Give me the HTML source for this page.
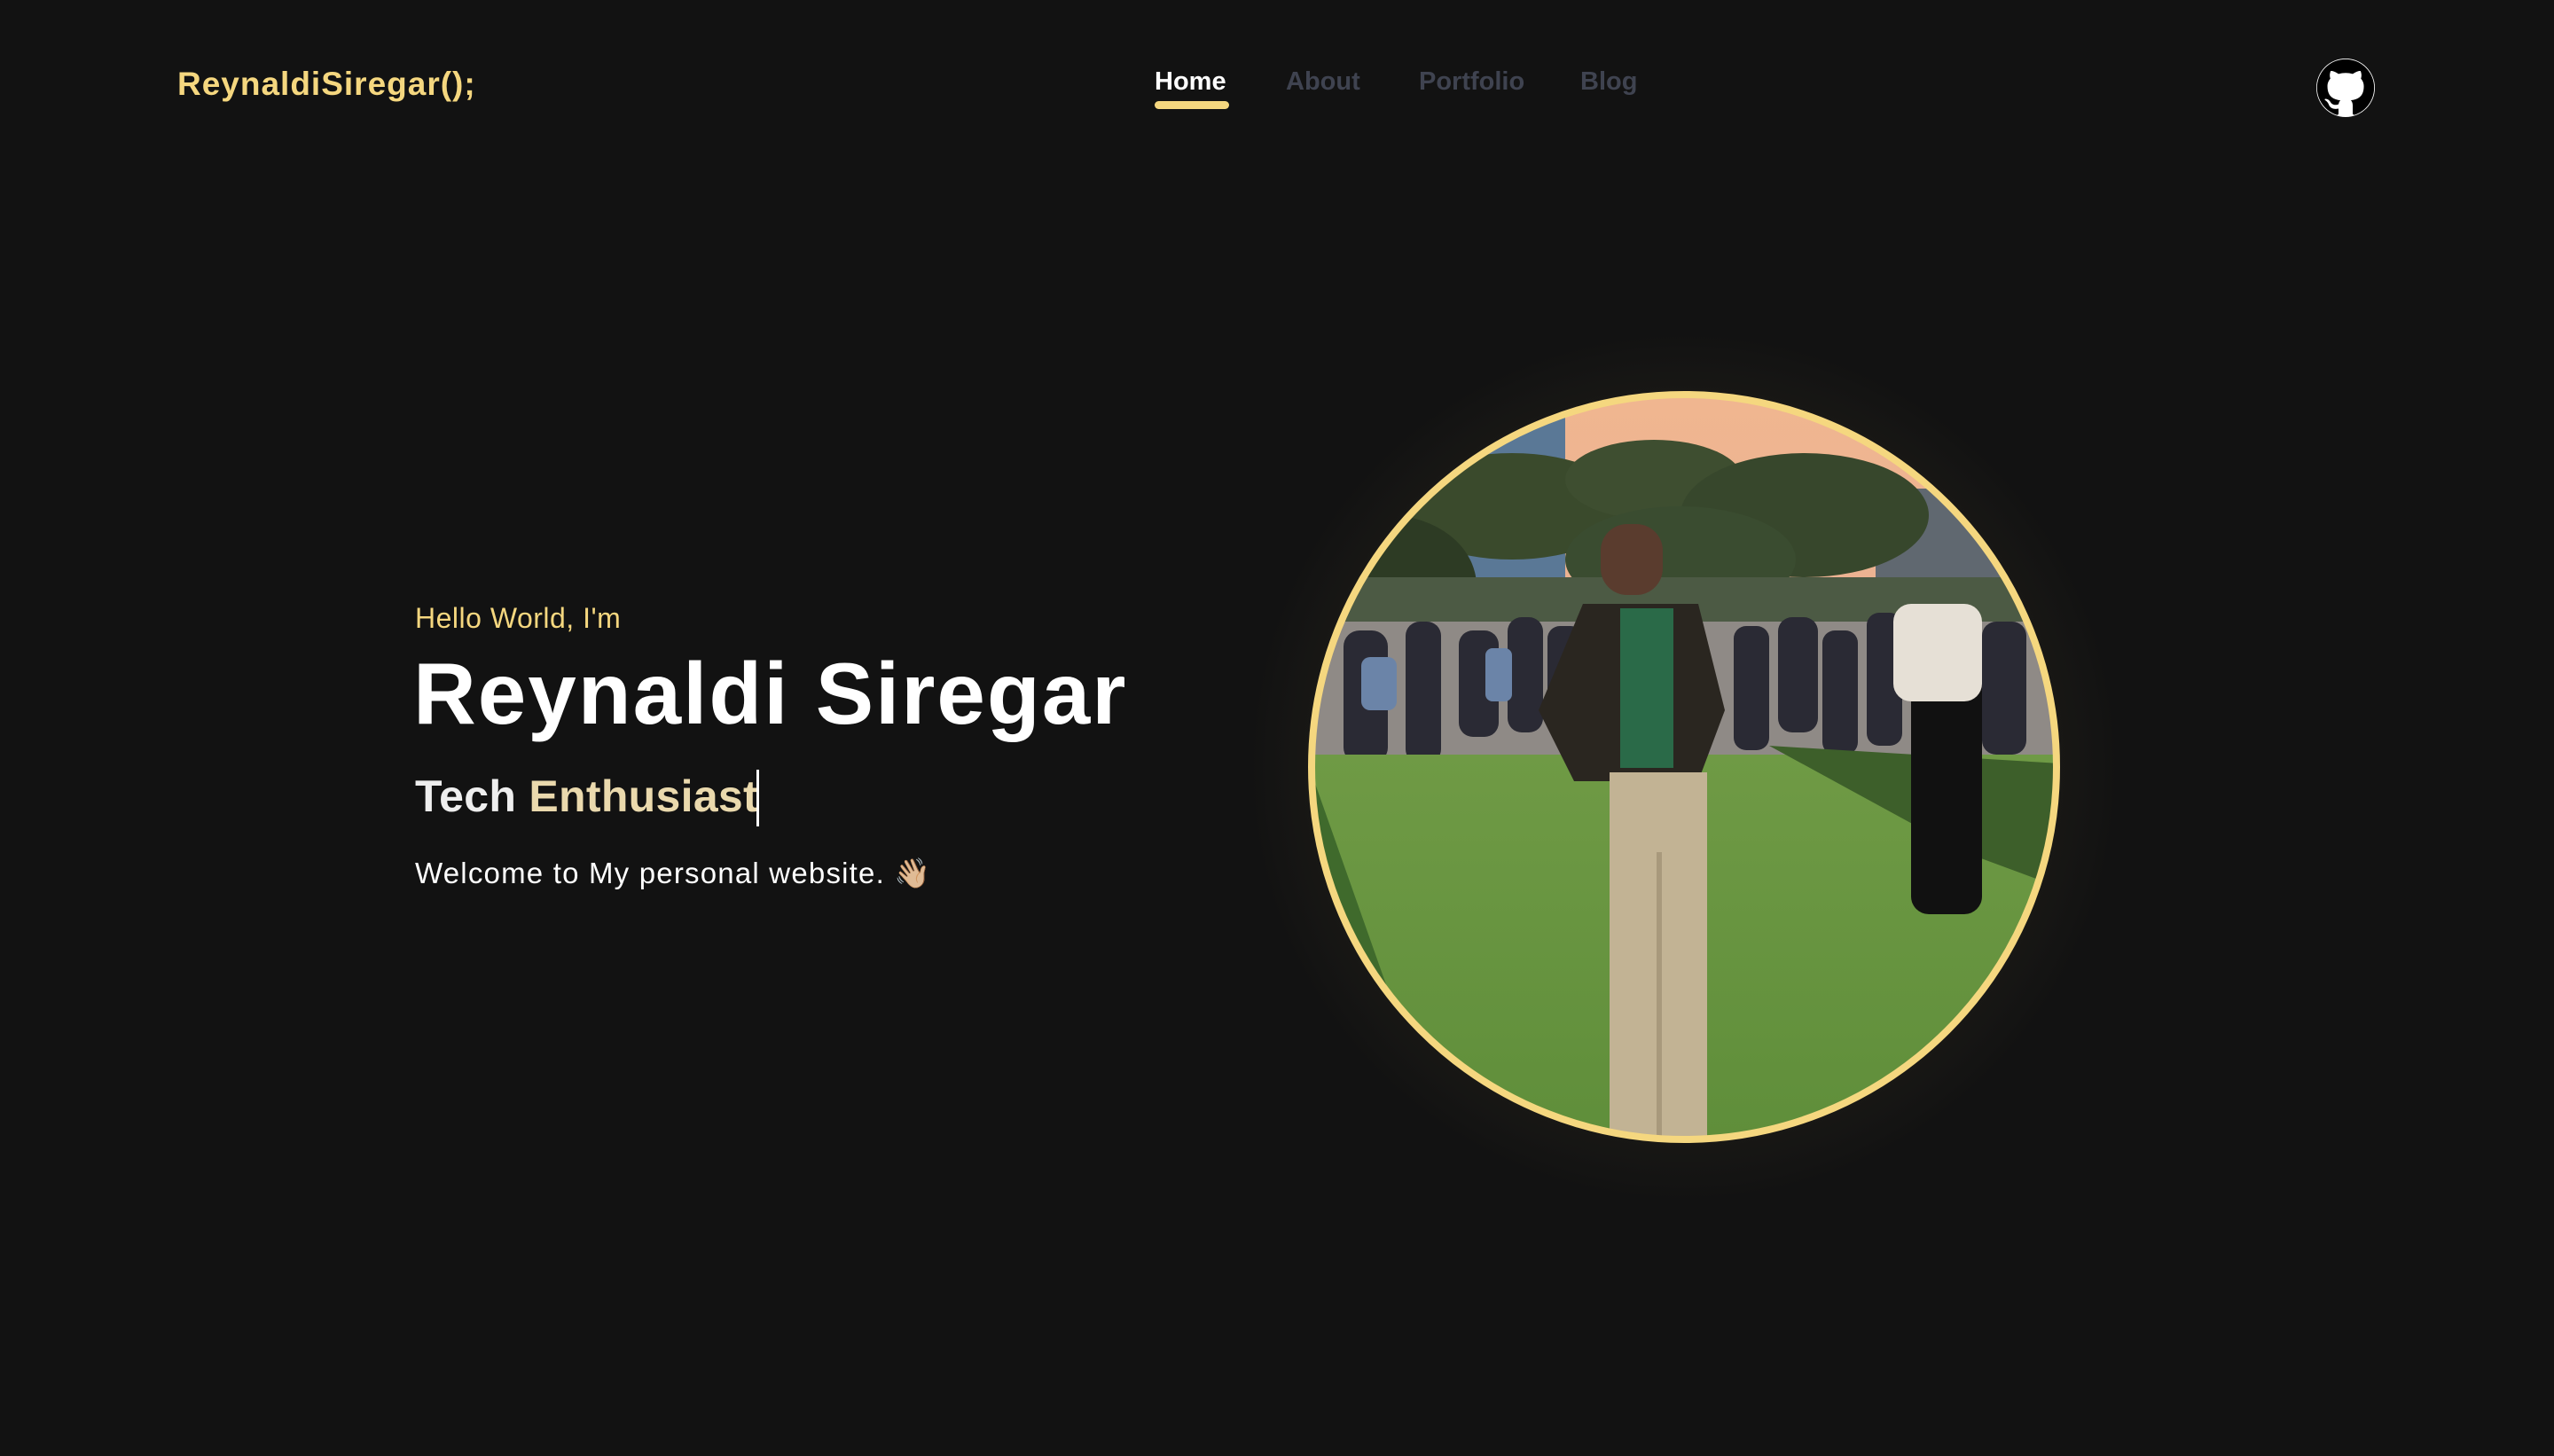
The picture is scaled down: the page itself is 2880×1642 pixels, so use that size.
<!DOCTYPE html>
<html><head><meta charset="utf-8"><style>
html,body{margin:0;padding:0;background:#121212;width:2880px;height:1642px;overflow:hidden;font-family:"Liberation Sans",sans-serif}
.logo{position:absolute;left:200px;top:74px;font-size:37px;font-weight:bold;color:#f5d77f;letter-spacing:1px}
.nav{position:absolute;top:76px;font-size:29px;font-weight:bold;color:#3f4350}
.nav.active{color:#fff}
.bar{position:absolute;left:1302px;top:114px;width:84px;height:9px;border-radius:5px;background:#f5d77f}
.gh{position:absolute;left:2612px;top:66px;width:66px;height:66px}
.hello{position:absolute;left:468px;top:679px;font-size:32px;color:#f5d77f;letter-spacing:.5px}
.name{position:absolute;left:466px;top:726px;font-size:98px;font-weight:bold;color:#fff;letter-spacing:2px}
.tech{position:absolute;left:468px;top:869px;font-size:50px;font-weight:bold;color:#eee;letter-spacing:.3px}
.tech span{color:#ead9ad}
.cursor{position:absolute;left:853px;top:868px;width:3px;height:64px;background:#fff}
.welcome{position:absolute;left:468px;top:966px;font-size:33px;color:#fff;letter-spacing:1.2px}
.glow{position:absolute;left:1299px;top:265px;width:1200px;height:1200px;border-radius:50%;background:radial-gradient(circle,rgba(245,215,127,0.28) 33%,rgba(245,215,127,0.1) 40%,rgba(245,215,127,0.03) 48%,rgba(245,215,127,0) 58%)}
.photo{position:absolute;left:1475px;top:441px;width:848px;height:848px}
</style></head><body>
<div class="logo">ReynaldiSiregar();</div>
<div class="nav active" style="left:1302px">Home</div>
<div class="bar"></div>
<div class="nav" style="left:1450px">About</div>
<div class="nav" style="left:1600px">Portfolio</div>
<div class="nav" style="left:1782px">Blog</div>
<svg class="gh" viewBox="0 0 16 16"><circle cx="8" cy="8" r="8" fill="#fff"/><path fill="#000" d="M8 .2a7.8 7.8 0 0 0-2.47 15.2c.39.07.53-.17.53-.38v-1.33c-2.17.47-2.630-1.05-2.63-1.05-.35-.9-.86-1.140-.86-1.14-.71-.49.05-.48.05-.48.78.06 1.2.8 1.2.8.7 1.2 1.82.85 2.27.65.07-.5.27-.85.5-1.05-1.73-.2-3.55-.87-3.55-3.85 0-.85.3-1.55.8-2.1-.08-.2-.35-.99.08-2.06 0 0 .65-.21 2.14.8a7.4 7.4 0 0 1 3.9 0c1.49-1.01 2.140-.8 2.14-.8.43 1.07.16 1.86.08 2.06.5.55.8 1.25.8 2.1 0 2.99-1.82 3.65-3.56 3.84.28.24.53.72.53 1.45v2.15c0 .21.14.46.54.38A7.8 7.8 0 0 0 8 .2z"/></svg>
<div class="hello">Hello World, I'm</div>
<div class="name">Reynaldi Siregar</div>
<div class="tech">Tech <span>Enthusiast</span></div>
<div class="cursor"></div>
<div class="welcome">Welcome to My personal website. 👋🏼</div>
<div class="glow"></div>
<div class="photo">
<svg width="848" height="848" viewBox="0 0 848 848">
<defs><clipPath id="c"><circle cx="424" cy="424" r="420"/></clipPath>
<linearGradient id="sky" x1="0" y1="0" x2="0" y2="1"><stop offset="0" stop-color="#f0b690"/><stop offset="1" stop-color="#e0a89a"/></linearGradient>
<linearGradient id="grass" x1="0" y1="0" x2="0" y2="1"><stop offset="0" stop-color="#6f9a45"/><stop offset="1" stop-color="#5f8e3a"/></linearGradient></defs>
<g clip-path="url(#c)">
<rect width="848" height="848" fill="url(#sky)"/>
<rect x="90" y="20" width="200" height="240" fill="#5a7896"/>
<rect x="640" y="110" width="200" height="140" fill="#606870"/>
<ellipse cx="230" cy="130" rx="130" ry="60" fill="#3a4a2c"/>
<ellipse cx="390" cy="100" rx="100" ry="45" fill="#3e4e30"/>
<ellipse cx="560" cy="140" rx="140" ry="70" fill="#37472c"/>
<ellipse cx="90" cy="220" rx="100" ry="80" fill="#2d3b24"/>
<ellipse cx="420" cy="190" rx="130" ry="60" fill="#3a4c30"/>
<rect x="0" y="210" width="848" height="60" fill="#4c5a44"/>
<rect x="0" y="260" width="848" height="160" fill="#8f8a86"/>
<g fill="#2a2a34">
<rect x="40" y="270" width="50" height="150" rx="18"/><rect x="110" y="260" width="40" height="160" rx="16"/>
<rect x="170" y="270" width="45" height="120" rx="16"/><rect x="225" y="255" width="40" height="130" rx="16"/>
<rect x="270" y="265" width="40" height="120" rx="14"/><rect x="480" y="265" width="40" height="140" rx="14"/>
<rect x="530" y="255" width="45" height="130" rx="16"/><rect x="580" y="270" width="40" height="140" rx="14"/>
<rect x="630" y="250" width="40" height="150" rx="14"/><rect x="760" y="260" width="50" height="150" rx="16"/>
</g>
<g fill="#6b84a8"><rect x="60" y="300" width="40" height="60" rx="10"/><rect x="200" y="290" width="30" height="60" rx="8"/></g>
<rect x="0" y="410" width="848" height="440" fill="url(#grass)"/>
<path d="M0 420 L120 760 L0 800Z" fill="#3f6a2c"/>
<path d="M520 400 L848 420 L848 560 L740 520Z" fill="#3d5f2a"/>
<rect x="680" y="270" width="80" height="320" fill="#111" rx="20"/>
<rect x="660" y="240" width="100" height="110" fill="#e6e0d6" rx="20"/>
<rect x="330" y="150" width="70" height="80" fill="#5a3c2e" rx="30"/>
<path d="M310 240 L440 240 L470 360 L440 440 L300 440 L260 360Z" fill="#2a2620"/>
<rect x="352" y="245" width="60" height="180" fill="#2a6a48"/>
<rect x="340" y="430" width="110" height="410" fill="#c2b394"/>
<rect x="393" y="520" width="6" height="320" fill="#a8997c"/>
</g>
<circle cx="424" cy="424" r="420" fill="none" stroke="#f5d77f" stroke-width="8"/>
</svg>
</div>
</body></html>
